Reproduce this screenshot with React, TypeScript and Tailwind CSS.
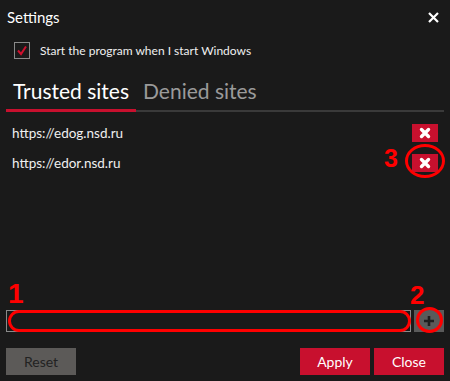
import { useState } from "react";

const sites = ["https://edog.nsd.ru", "https://edor.nsd.ru"];

function DeleteButton() {
  return (
    <button className="flex h-[18px] w-[26px] items-center justify-center bg-[#c8102e]">
      <svg width="12" height="12" viewBox="0 0 12 12">
        <path d="M2.5 2.5 L9.5 9.5 M9.5 2.5 L2.5 9.5" stroke="#fff" strokeWidth="3.4" strokeLinecap="round" />
      </svg>
    </button>
  );
}

export default function App() {
  const [tab, setTab] = useState("trusted");

  return (
    <div
      className="relative flex h-[381px] w-[450px] flex-col overflow-hidden bg-[#1a1a1a] text-white"
      style={{ fontFamily: 'Lato, "Noto Sans", sans-serif' }}
    >
      {/* title bar */}
      <div className="flex h-[34px] items-center justify-between pl-[7px] pr-[11px]">
        <span className="text-[15px] leading-none">Settings</span>
        <svg width="11" height="11" viewBox="0 0 11 11">
          <path d="M1 1 L10 10 M10 1 L1 10" stroke="#fff" strokeWidth="2.2" />
        </svg>
      </div>

      {/* autostart */}
      <label className="mt-[8px] flex h-[17px] items-center gap-[10px] pl-[14px]">
        <span className="flex h-[17px] w-[16px] items-center justify-center border border-[#8a8a8a]">
          <svg width="12" height="11" viewBox="0 0 12 11">
            <path d="M2 5.5 L5 9 L10 1.5" stroke="#d0102e" strokeWidth="2" fill="none" />
          </svg>
        </span>
        <span className="text-[12px] text-[#f0f0f0]">Start the program when I start Windows</span>
      </label>

      {/* tabs */}
      <div className="mx-[6px] mt-[17px] flex border-b-2 border-[#3a3a3a]">
        <button
          onClick={() => setTab("trusted")}
          className={
            "-mb-[2px] border-b-[3px] px-[7px] pb-[4px] text-[21px] leading-[29px] " +
            (tab === "trusted" ? "border-[#c8102e] text-white" : "border-transparent text-[#9a9a9a]")
          }
        >
          Trusted sites
        </button>
        <button
          onClick={() => setTab("denied")}
          className={
            "-mb-[2px] border-b-[3px] px-[7px] pb-[4px] text-[21px] leading-[29px] " +
            (tab === "denied" ? "border-[#c8102e] text-white" : "border-transparent text-[#9a9a9a]")
          }
        >
          Denied sites
        </button>
      </div>

      {/* list */}
      <div className="mt-[6px] flex flex-col">
        {sites.map((s) => (
          <div key={s} className="flex h-[30px] items-center justify-between pl-[12px] pr-[12px]">
            <span className="text-[13.5px] text-[#f0f0f0]">{s}</span>
            <DeleteButton />
          </div>
        ))}
      </div>

      <div className="flex-1" />

      {/* new site */}
      <div className="mb-[16px] flex h-[22px] gap-[3px] pl-[6px] pr-[6px]">
        <input className="h-full flex-1 border border-[#8a8a8a] bg-[#1a1a1a] outline-none" />
        <button className="flex h-full w-[30px] items-center justify-center bg-[#5a5a5a]">
          <svg width="12" height="12" viewBox="0 0 12 12">
            <path d="M6 1 V11 M1 6 H11" stroke="#1e1e1e" strokeWidth="2.6" />
          </svg>
        </button>
      </div>

      {/* footer */}
      <div className="mb-[6px] flex h-[27px] items-center gap-[4px] px-[6px]">
        <button className="h-full w-[70px] bg-[#5c5a58] text-[14px] text-[#222]">Reset</button>
        <div className="flex-1" />
        <button className="h-full w-[70px] bg-[#c8102e] text-[14px] text-white">Apply</button>
        <button className="h-full w-[70px] bg-[#c8102e] text-[14px] text-white">Close</button>
      </div>

      {/* annotations */}
      <span className="absolute left-[384px] top-[143px] text-[25px] font-bold leading-[30px] text-[#ff0000]" style={{ fontFamily: '"Liberation Sans", sans-serif' }}>3</span>
      <span className="absolute left-[405px] top-[144px] h-[34px] w-[40px] rounded-[50%] border-[3px] border-[#ff0000]" />
      <span className="absolute left-[8px] top-[279px] text-[28px] font-bold leading-[30px] text-[#ff0000]" style={{ fontFamily: '"Liberation Sans", sans-serif' }}>1</span>
      <span className="absolute left-[8px] top-[310px] h-[22px] w-[403px] rounded-full border-[3px] border-[#ff0000]" />
      <span className="absolute left-[410px] top-[280px] text-[26px] font-bold leading-[30px] text-[#ff0000]" style={{ fontFamily: '"Liberation Sans", sans-serif' }}>2</span>
      <span className="absolute left-[416px] top-[307px] h-[26px] w-[27px] rounded-[50%] border-[3px] border-[#ff0000]" />
    </div>
  );
}
